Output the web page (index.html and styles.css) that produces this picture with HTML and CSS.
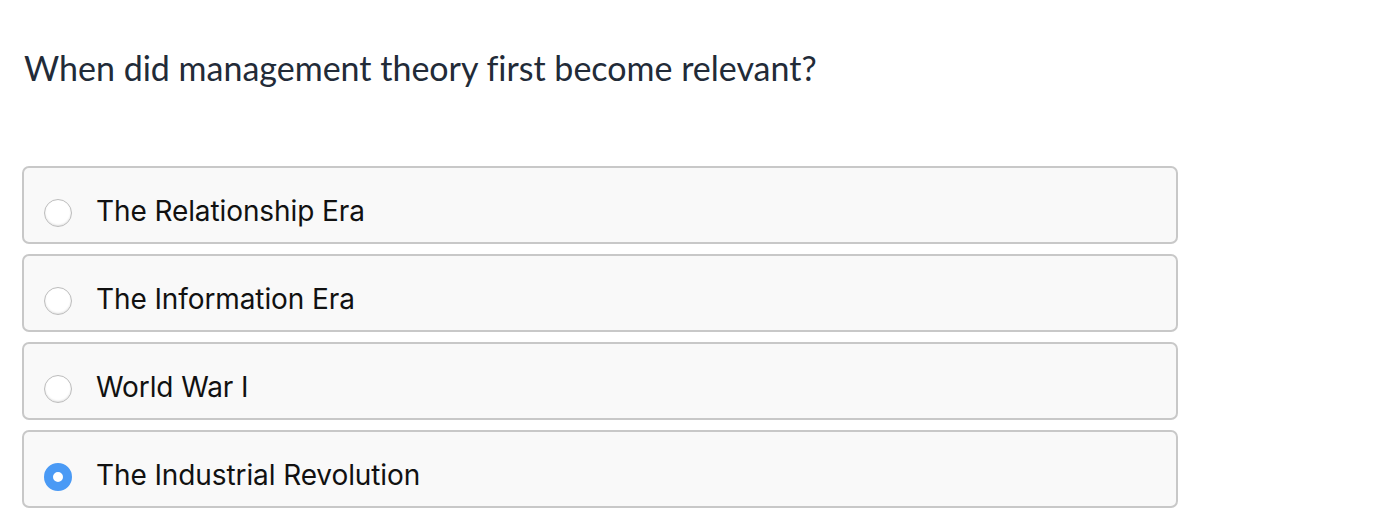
FILE: index.html
```html
<!DOCTYPE html>
<html>
<head>
<meta charset="utf-8">
<link rel="stylesheet" href="styles.css">
</head>
<body>
<div class="quiz">
  <h1 class="question">When did management theory first become relevant?</h1>
  <div class="options">
    <label class="option"><span class="radio"></span><span class="label">The Relationship Era</span></label>
    <label class="option"><span class="radio"></span><span class="label">The Information Era</span></label>
    <label class="option"><span class="radio"></span><span class="label">World War I</span></label>
    <label class="option"><span class="radio checked"></span><span class="label">The Industrial Revolution</span></label>
  </div>
</div>
</body>
</html>
```
FILE: styles.css
```css
html, body {
  margin: 0;
  padding: 0;
  background: #ffffff;
}
.quiz {
  padding: 46px 0 0 22px;
}
.question {
  margin: 0 0 0 2px;
  font-family: Lato, "Open Sans", sans-serif;
  font-weight: 400;
  font-size: 34px;
  line-height: 44px;
  color: #222b38;
  font-variant-ligatures: none;
}
.options {
  margin-top: 76px;
  width: 1156px;
  display: flex;
  flex-direction: column;
  gap: 10px;
}
.option {
  box-sizing: border-box;
  height: 78px;
  border: 2px solid #c8c8c8;
  border-radius: 7px;
  background: #f9f9f9;
  display: flex;
  align-items: center;
  padding-left: 20px;
  padding-top: 12px;
  gap: 24px;
}
.radio {
  box-sizing: border-box;
  width: 28px;
  height: 28px;
  margin-top: 4px;
  border-radius: 50%;
  border: 1px solid #bdbdbd;
  background: #ffffff;
  box-shadow: inset 0 -1px 2px rgba(0,0,0,0.12);
  flex: none;
}
.radio.checked {
  border: 9px solid #4a9af5;
  box-shadow: none;
  background: #ffffff;
}
.label {
  font-family: Inter, "Liberation Sans", sans-serif;
  font-size: 28px;
  color: #111111;
  letter-spacing: -0.1px;
}
```
